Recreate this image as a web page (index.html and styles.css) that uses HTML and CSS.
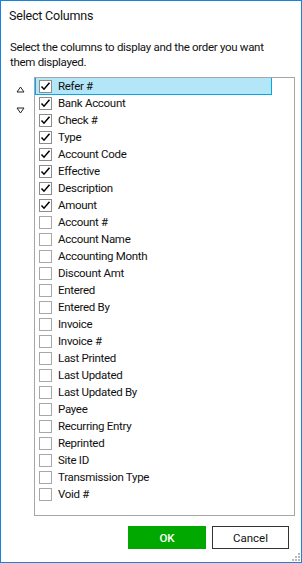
FILE: index.html
```html
<!DOCTYPE html>
<html>
<head>
<meta charset="utf-8">
<link rel="stylesheet" href="styles.css">
</head>
<body>
<div class="window">
  <div class="title">Select Columns</div>
  <div class="desc">Select the columns to display and the order you want them displayed.</div>
  <div class="main">
    <div class="arrows">
      <svg class="arrow up" width="9" height="7" viewBox="0 0 9 7"><path d="M4.5 1 L8 6 L1 6 Z" fill="none" stroke="#222" stroke-width="1"/></svg>
      <svg class="arrow down" width="9" height="7" viewBox="0 0 9 7"><path d="M1 1 L8 1 L4.5 6 Z" fill="none" stroke="#222" stroke-width="1"/></svg>
    </div>
    <div class="list">
      <div class="item selected"><span class="box checked"><svg width="11" height="11" viewBox="0 0 11 11"><path d="M1.5 5.5 L4 8.2 L9.5 1.8" fill="none" stroke="#000" stroke-width="1.5"/></svg></span><span class="label">Refer #</span></div>
      <div class="item"><span class="box checked"><svg width="11" height="11" viewBox="0 0 11 11"><path d="M1.5 5.5 L4 8.2 L9.5 1.8" fill="none" stroke="#000" stroke-width="1.5"/></svg></span><span class="label">Bank Account</span></div>
      <div class="item"><span class="box checked"><svg width="11" height="11" viewBox="0 0 11 11"><path d="M1.5 5.5 L4 8.2 L9.5 1.8" fill="none" stroke="#000" stroke-width="1.5"/></svg></span><span class="label">Check #</span></div>
      <div class="item"><span class="box checked"><svg width="11" height="11" viewBox="0 0 11 11"><path d="M1.5 5.5 L4 8.2 L9.5 1.8" fill="none" stroke="#000" stroke-width="1.5"/></svg></span><span class="label">Type</span></div>
      <div class="item"><span class="box checked"><svg width="11" height="11" viewBox="0 0 11 11"><path d="M1.5 5.5 L4 8.2 L9.5 1.8" fill="none" stroke="#000" stroke-width="1.5"/></svg></span><span class="label">Account Code</span></div>
      <div class="item"><span class="box checked"><svg width="11" height="11" viewBox="0 0 11 11"><path d="M1.5 5.5 L4 8.2 L9.5 1.8" fill="none" stroke="#000" stroke-width="1.5"/></svg></span><span class="label">Effective</span></div>
      <div class="item"><span class="box checked"><svg width="11" height="11" viewBox="0 0 11 11"><path d="M1.5 5.5 L4 8.2 L9.5 1.8" fill="none" stroke="#000" stroke-width="1.5"/></svg></span><span class="label">Description</span></div>
      <div class="item"><span class="box checked"><svg width="11" height="11" viewBox="0 0 11 11"><path d="M1.5 5.5 L4 8.2 L9.5 1.8" fill="none" stroke="#000" stroke-width="1.5"/></svg></span><span class="label">Amount</span></div>
      <div class="item"><span class="box"></span><span class="label">Account #</span></div>
      <div class="item"><span class="box"></span><span class="label">Account Name</span></div>
      <div class="item"><span class="box"></span><span class="label">Accounting Month</span></div>
      <div class="item"><span class="box"></span><span class="label">Discount Amt</span></div>
      <div class="item"><span class="box"></span><span class="label">Entered</span></div>
      <div class="item"><span class="box"></span><span class="label">Entered By</span></div>
      <div class="item"><span class="box"></span><span class="label">Invoice</span></div>
      <div class="item"><span class="box"></span><span class="label">Invoice #</span></div>
      <div class="item"><span class="box"></span><span class="label">Last Printed</span></div>
      <div class="item"><span class="box"></span><span class="label">Last Updated</span></div>
      <div class="item"><span class="box"></span><span class="label">Last Updated By</span></div>
      <div class="item"><span class="box"></span><span class="label">Payee</span></div>
      <div class="item"><span class="box"></span><span class="label">Recurring Entry</span></div>
      <div class="item"><span class="box"></span><span class="label">Reprinted</span></div>
      <div class="item"><span class="box"></span><span class="label">Site ID</span></div>
      <div class="item"><span class="box"></span><span class="label">Transmission Type</span></div>
      <div class="item"><span class="box"></span><span class="label">Void #</span></div>
    </div>
  </div>
  <div class="buttons">
    <button class="btn ok">OK</button>
    <button class="btn cancel">Cancel</button>
  </div>
  <svg class="grip" width="9" height="9" viewBox="0 0 9 9">
    <rect x="7" y="1" width="2" height="2" fill="#b8b8b8"/>
    <rect x="4" y="4" width="2" height="2" fill="#b8b8b8"/>
    <rect x="7" y="4" width="2" height="2" fill="#b8b8b8"/>
    <rect x="1" y="7" width="2" height="2" fill="#b8b8b8"/>
    <rect x="4" y="7" width="2" height="2" fill="#b8b8b8"/>
    <rect x="7" y="7" width="2" height="2" fill="#b8b8b8"/>
  </svg>
</div>
</body>
</html>
```

FILE: styles.css
```css
* { box-sizing: border-box; }
html, body { margin: 0; padding: 0; background: #fff; }
.window {
  position: relative;
  width: 302px;
  height: 563px;
  border: 1px solid #1883d7;
  background: #fff;
  font-family: Roboto, "Noto Sans", sans-serif;
  color: #111;
  font-size: 11px;
  letter-spacing: -0.3px;
}
.title {
  font-size: 12.5px;
  line-height: 16px;
  padding: 7px 0 0 8px;
  letter-spacing: -0.2px;
}
.desc {
  font-size: 11.5px;
  line-height: 15px;
  padding: 16px 26px 0 9px;
}
.main {
  display: flex;
  margin-top: 7px;
}
.arrows {
  width: 33px;
  display: flex;
  flex-direction: column;
  align-items: center;
  padding-top: 9px;
  padding-left: 5px;
  gap: 14px;
}
.arrow { display: block; }
.list {
  width: 261px;
  height: 439px;
  border: 1px solid #a6a6a6;
}
.item {
  height: 17px;
  display: flex;
  align-items: center;
  width: 237px;
  padding-left: 3px;
  border: 1px solid transparent;
}
.item.selected {
  background: #b3e7f8;
  border: 1px solid #0aa5e6;
  border-top: none;
  padding-top: 1px;
}
.box {
  width: 13px;
  height: 13px;
  border: 1px solid #a8a8a8;
  display: flex;
  align-items: center;
  justify-content: center;
  flex: none;
  background: #fff;
}
.box.checked { border-color: #8c8c8c; }
.box svg { display: block; }
.label {
  margin-left: 6px;
  font-size: 11.5px;
  line-height: 15px;
  white-space: nowrap;
}
.buttons {
  display: flex;
  justify-content: flex-end;
  gap: 6px;
  padding: 10px 12px 0 0;
}
.btn {
  font-family: Roboto, "Noto Sans", sans-serif;
  font-size: 11.5px;
  height: 23px;
  padding: 0;
  margin: 0;
}
.ok {
  width: 78px;
  background: #00a800;
  color: #fff;
  border: none;
  font-weight: 500;
}
.cancel {
  width: 77px;
  background: #fff;
  color: #111;
  border: 1px solid #333;
}
.grip {
  position: absolute;
  right: 1px;
  bottom: 1px;
}
```
